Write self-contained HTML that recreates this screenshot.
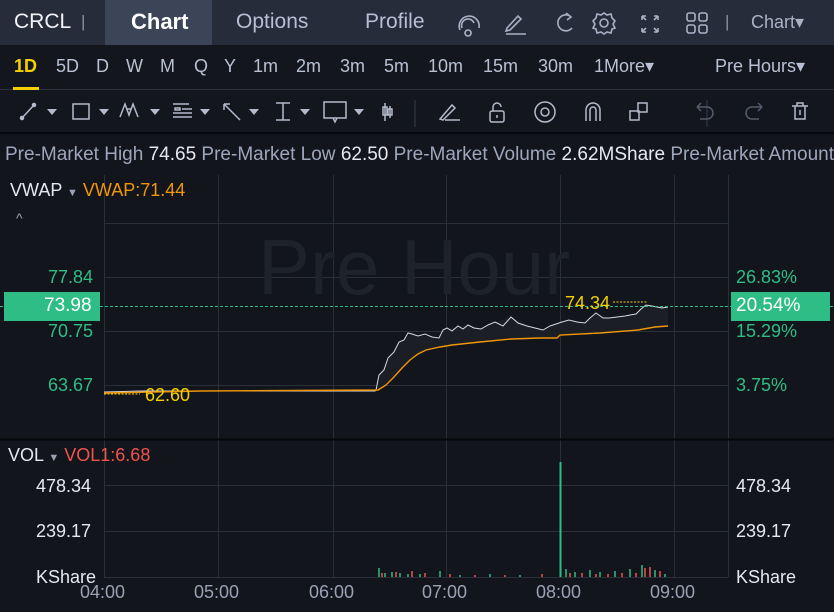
<!DOCTYPE html>
<html><head><meta charset="utf-8"><style>
*{margin:0;padding:0;box-sizing:border-box}
body{width:834px;height:612px;background:#12151b;font-family:"Liberation Sans",sans-serif;overflow:hidden;position:relative;color:#c9cdd8}
.a{position:absolute;white-space:nowrap}
#top{position:absolute;left:0;top:0;width:834px;height:45px;background:#262c3a}
#tf{position:absolute;left:0;top:45px;width:834px;height:45px;background:#13161c;border-bottom:1px solid #2b303b}
#tb{position:absolute;left:0;top:90px;width:834px;height:44px;background:#13161c;border-bottom:2px solid #05070a}
.tf{font-size:18px;color:#b9c0d4;top:56px}
.g{color:#2ebd85;font-size:18px}
.w{font-size:18px;color:#e6e8ee}
</style></head><body>
<div id="top"></div>
<div class="a" style="left:105px;top:0;width:107px;height:45px;background:#3b4557"></div>
<div class="a" style="left:14px;top:10px;font-size:21px;color:#f2f4f8">CRCL</div>
<div class="a" style="left:81px;top:12px;font-size:17px;color:#8a91a3">|</div>
<div class="a" style="left:131px;top:9px;font-size:22px;color:#ffffff;font-weight:bold">Chart</div>
<div class="a" style="left:236px;top:10px;font-size:21px;color:#b7bfd4">Options</div>
<div class="a" style="left:365px;top:10px;font-size:21px;color:#b7bfd4">Profile</div>
<svg class="a" style="left:450px;top:8px" width="280" height="30" fill="none" stroke="#aab1c4" stroke-width="1.6">
<path d="M10 22 A10 10 0 1 1 29 20 M12 20 A6 6 0 0 1 24 15 M18 22a3 3 0 1 0 0.1 0"/>
<path d="M57 20 L68 8 L71 11 L60 22 L56 23 Z M56 26 H76"/>
<path d="M120 8 A8 8 0 1 0 122 20 M116 5 L121 9 L117 12"/>
<circle cx="154" cy="15" r="4"/><path d="M154 5l3 2 4-1 1 4 3 3-2 3 2 4-3 1-1 4-4-1-3 2-3-2-4 1-1-4-3-1 2-4-2-3 3-3 1-4 4 1z"/>
<path d="M192 8l4 4M192 8h4M192 8v4M208 8l-4 4M208 8h-4M208 8v4M192 24l4-4M192 24h4M192 24v-4M208 24l-4-4M208 24h-4M208 24v-4"/>
<rect x="237" y="5" width="8" height="8" rx="2"/><rect x="249" y="5" width="8" height="8" rx="2"/><rect x="237" y="17" width="8" height="8" rx="2"/><rect x="249" y="17" width="8" height="8" rx="2"/>
</svg>
<div class="a" style="left:725px;top:12px;font-size:17px;color:#8a91a3">|</div>
<div class="a" style="left:751px;top:12px;font-size:18px;color:#aab1c4">Chart▾</div>
<div id="tf"></div>
<div class="a tf" style="left:14px;color:#f5d000;font-weight:bold">1D</div>
<div class="a" style="left:13px;top:87px;width:26px;height:3px;background:#f5d000"></div>
<div class="a tf" style="left:56px">5D</div>
<div class="a tf" style="left:96px">D</div>
<div class="a tf" style="left:126px">W</div>
<div class="a tf" style="left:160px">M</div>
<div class="a tf" style="left:194px">Q</div>
<div class="a tf" style="left:224px">Y</div>
<div class="a tf" style="left:253px">1m</div>
<div class="a tf" style="left:296px">2m</div>
<div class="a tf" style="left:340px">3m</div>
<div class="a tf" style="left:384px">5m</div>
<div class="a tf" style="left:428px">10m</div>
<div class="a tf" style="left:483px">15m</div>
<div class="a tf" style="left:538px">30m</div>
<div class="a tf" style="left:594px">1More▾</div>
<div class="a tf" style="left:715px">Pre Hours▾</div>
<div id="tb"></div>
<svg class="a" style="left:0;top:95px" width="834" height="36" fill="none" stroke="#b4bacb" stroke-width="1.5">
<path d="M22 23 L34 10"/><circle cx="22" cy="23" r="1.5" fill="#b4bacb"/><circle cx="34" cy="10" r="1.5" fill="#b4bacb"/>
<path d="M47 14h10l-5 6z M99 14h10l-5 6z M150 14h10l-5 6z M200 14h10l-5 6z M249 14h10l-5 6z M300 14h10l-5 6z M354 14h10l-5 6z" fill="#b4bacb" stroke="none"/>
<rect x="73" y="9" width="16" height="15"/>
<path d="M120 22 L125 9 L129 20 L133 9 L138 22 M127 14 L131 14"/>
<path d="M173 9h16M175 13h5v2h-5z M182 14h10M173 18h19M173 22h19"/>
<path d="M224 9 L240 25 M224 9h6 M224 9v6"/>
<path d="M276 8h14M283 8v17M276 25h14"/>
<rect x="324" y="7" width="22" height="16"/><path d="M333 23l2 4 2-4"/>
<path d="M385 8v18M390 11v12M383 12h4v8h-4zM388 14h4v6h-4z"/>
<path d="M415 5v27M707 5v27" stroke="#2b303b"/>
<path d="M440 24 L452 10 L455 13 L443 25 Z M445 25 H460"/>
<rect x="490" y="16" width="14" height="11" rx="2"/><path d="M493 16v-4a4 4 0 0 1 8 0" /><path d="M497 20v3"/>
<circle cx="545" cy="17" r="10"/><circle cx="545" cy="17" r="4"/>
<path d="M586 26V15a7 7 0 0 1 14 0v11M590 26V15a3 3 0 0 1 6 0v11"/>
<rect x="630" y="16" width="9" height="9"/><rect x="638" y="8" width="9" height="9"/>
<path d="M697 12h10a6 6 0 0 1 0 12h-7M697 12l4-4M697 12l4 4" stroke="#555b6a"/>
<path d="M762 12h-10a6 6 0 0 0 0 12h7M762 12l-4-4M762 12l-4 4" stroke="#555b6a"/>
<path d="M792 11h16M797 11V8h6v3M795 11v13h10V11M800 15v5"/>
</svg>
<div class="a" style="left:5px;top:144px;font-size:19px;color:#9ea6bd">Pre-Market High <span style="color:#e6e8ee">74.65</span> Pre-Market Low <span style="color:#e6e8ee">62.50</span> Pre-Market Volume <span style="color:#e6e8ee">2.62MShare</span> Pre-Market Amount</div>
<svg class="a" style="left:0;top:0" width="834" height="612">
<g stroke="#2a2f3a" stroke-width="1">
<path d="M104.5 175V577M218.5 175V577M333.5 175V577M446.5 175V577M560.5 175V577M674.5 175V577M728.5 175V577"/>
<path d="M104 223.5H728M104 277.5H728M104 331.5H728M104 385.5H728M104 485.5H728M104 531.5H728M104 577.5H728"/>
</g>
<path d="M0 439.5H834" stroke="#05070a" stroke-width="2"/>
<text x="414" y="294" font-family="Liberation Sans" font-size="78" fill="#1e222b" text-anchor="middle">Pre Hour</text>
<path d="M375 392 L379 375 L388 358 L399 342 L412 334 L425 336 L439 338 L447 328 L468 325 L481 329 L495 322 L511 317 L527 326 L543 330 L556 324 L569 320 L585 323 L596 313 L609 318 L625 316 L636 314 L646 305 L657 307 L668 307 L668 326 L655 327 L638 330 L600 333 L560 335 L557 338 L511 339 L452 345 L426 350 L410 360 L394 377 L378 390Z" fill="#1b1e25"/>
<path d="M104 392 L140 391 L200 391 L260 391 L320 391 L375 391 L376 390 L379 375 L384 370 L388 358 L394 352 L399 342 L404 340 L408 333 L412 334 L418 336 L425 334 L432 337 L439 338 L443 330 L447 328 L452 331 L458 326 L463 329 L468 325 L474 328 L481 329 L488 325 L495 322 L503 326 L511 317 L518 323 L527 326 L535 328 L543 330 L550 326 L556 324 L562 322 L569 320 L577 322 L585 323 L590 318 L596 313 L603 318 L609 318 L617 317 L625 316 L630 315 L636 314 L641 309 L646 305 L652 306 L657 307 L662 308 L668 307" stroke="#d6d8de" stroke-width="1" fill="none"/>
<path d="M104 393 L200 391 L378 390 L386 385 L394 377 L402 368 L410 360 L418 354 L426 350 L440 347 L452 345 L480 342 L511 339 L540 338 L557 338 L560 335 L600 333 L638 330 L655 327 L668 326" stroke="#f0960a" stroke-width="1.4" fill="none"/>
<path d="M0 306.5H834" stroke="#2ebd85" stroke-dasharray="3 2"/>
<path d="M104 394H140M613 302H648" stroke="#f5d000" stroke-dasharray="2 1.5"/>
<text x="145" y="401" font-family="Liberation Sans" font-size="18" fill="#f5d000">62.60</text>
<text x="565" y="309" font-family="Liberation Sans" font-size="18" fill="#f5d000">74.34</text>
<path d="M560.5 462V577" stroke="#2ebd85" stroke-width="2"/>
<g stroke="#2ebd85" stroke-width="1.5">
<path d="M379 577v-9M385 577v-4M392 577v-5M400 577v-4M408 577v-3M420 577v-3M440 577v-6M460 577v-2M490 577v-3M520 577v-2M566 577v-8M575 577v-5M590 577v-7M600 577v-5M615 577v-6M630 577v-8M642 577v-12M655 577v-7M665 577v-3"/>
</g>
<g stroke="#f0534c" stroke-width="1.5">
<path d="M382 577v-4M396 577v-5M412 577v-6M425 577v-4M450 577v-3M475 577v-2M505 577v-2M542 577v-3M570 577v-4M582 577v-4M596 577v-3M608 577v-3M622 577v-4M636 577v-4M645 577v-9M650 577v-10M660 577v-6"/>
</g>
</svg>
<div class="a" style="left:10px;top:180px;font-size:18px;color:#e6e8ee">VWAP <span style="color:#9aa1b5;font-size:11px">▼</span> <span style="color:#f0960a">VWAP:71.44</span></div>
<div class="a" style="left:16px;top:210px;font-size:14px;color:#9aa1b5">^</div>
<div class="a g" style="left:48px;top:267px">77.84</div>
<div class="a" style="left:4px;top:292px;width:96px;height:29px;background:#2ebd85"></div>
<div class="a" style="left:44px;top:295px;font-size:19px;color:#fff">73.98</div>
<div class="a g" style="left:48px;top:321px">70.75</div>
<div class="a g" style="left:48px;top:375px">63.67</div>
<div class="a g" style="left:736px;top:267px">26.83%</div>
<div class="a" style="left:731px;top:292px;width:99px;height:29px;background:#2ebd85"></div>
<div class="a" style="left:736px;top:295px;font-size:19px;color:#fff">20.54%</div>
<div class="a g" style="left:736px;top:321px">15.29%</div>
<div class="a g" style="left:736px;top:375px">3.75%</div>
<div class="a" style="left:8px;top:445px;font-size:18px;color:#e6e8ee">VOL <span style="color:#9aa1b5;font-size:11px">▼</span> <span style="color:#f0534c">VOL1:6.68</span></div>
<div class="a w" style="left:36px;top:476px">478.34</div>
<div class="a w" style="left:36px;top:521px">239.17</div>
<div class="a w" style="left:36px;top:567px">KShare</div>
<div class="a w" style="left:736px;top:476px">478.34</div>
<div class="a w" style="left:736px;top:521px">239.17</div>
<div class="a w" style="left:736px;top:567px">KShare</div>
<div class="a" style="left:80px;top:582px;font-size:18px;color:#9aa1b5">04:00</div>
<div class="a" style="left:194px;top:582px;font-size:18px;color:#9aa1b5">05:00</div>
<div class="a" style="left:309px;top:582px;font-size:18px;color:#9aa1b5">06:00</div>
<div class="a" style="left:422px;top:582px;font-size:18px;color:#9aa1b5">07:00</div>
<div class="a" style="left:536px;top:582px;font-size:18px;color:#9aa1b5">08:00</div>
<div class="a" style="left:650px;top:582px;font-size:18px;color:#9aa1b5">09:00</div>
</body></html>
